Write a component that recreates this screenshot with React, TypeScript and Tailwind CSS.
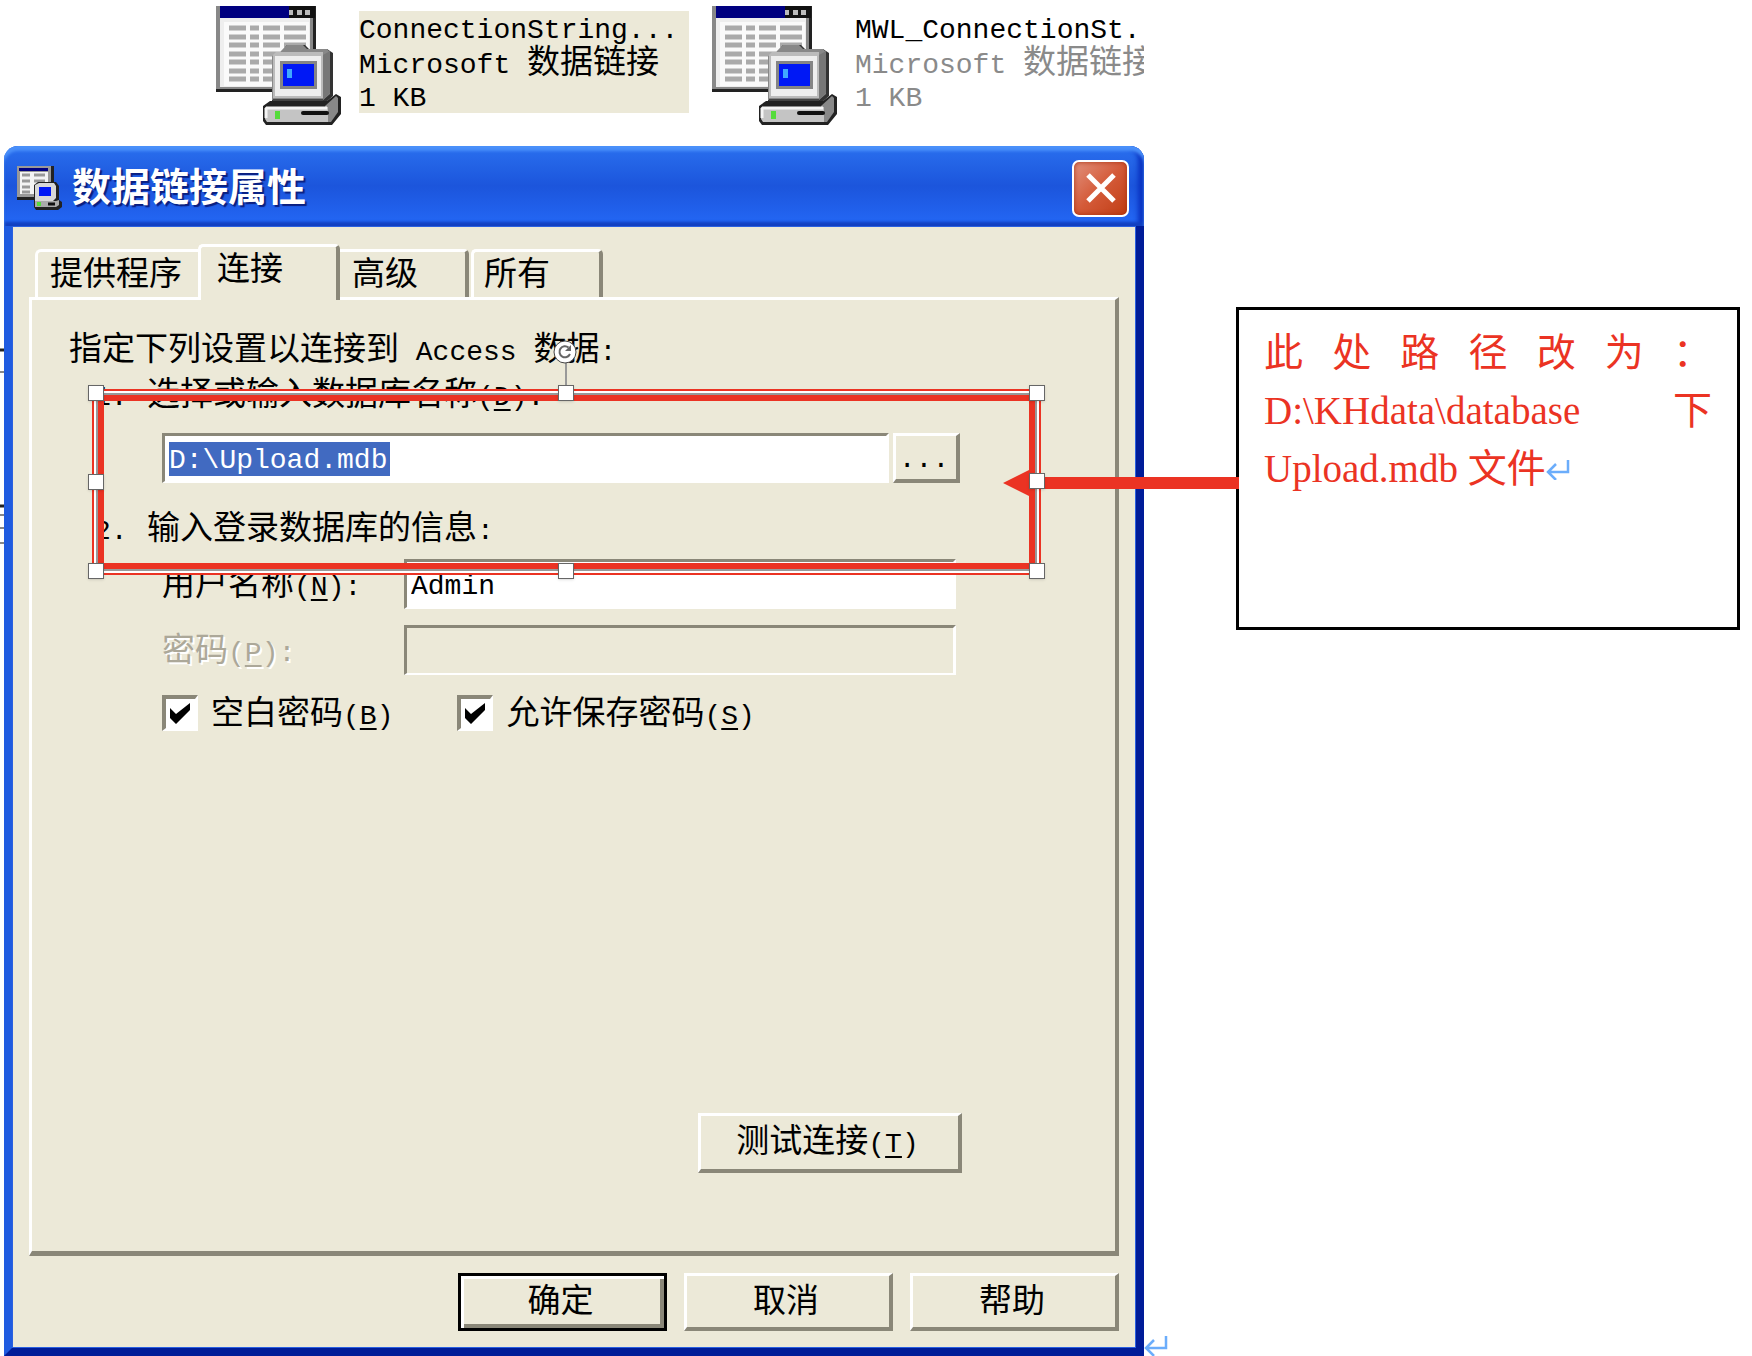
import { useState } from 'react'

const mono = "font-['Liberation_Mono','Noto_Sans_CJK_SC',monospace]"

export default function App() {
  const [blank, setBlank] = useState(true)
  const [save, setSave] = useState(true)

  return (
    <div className={`grid min-h-screen grid-cols-[1144fr_92fr_504fr_12fr] bg-white text-[33px] leading-10 text-black ${mono}`}>

      {/* Left column: files and dialog */}
      <main className="relative flex min-w-0 flex-col">
        <div className="flex h-[146px] items-start overflow-hidden whitespace-nowrap pl-[215px] pt-1.5">
          <FileIcon />
          <div className="ml-[17px] mt-[5px] h-[102px] w-[330px] shrink-0 bg-[#ece9d8] pt-[3px] leading-[34px]">
            <p className="text-[28px] leading-[34px]">ConnectionString...</p>
            <p className="h-[34px]"><En>Microsoft </En>数据链接</p>
            <p className="text-[28px] leading-[34px]">1 KB</p>
          </div>
          <div className="w-[22px] shrink-0" />
          <FileIcon />
          <div className="ml-[17px] mt-[5px] min-w-0 flex-1 overflow-hidden pt-[3px] leading-[34px] text-[#8a8a8a]">
            <p className="text-[28px] leading-[34px] text-black">MWL_ConnectionSt.</p>
            <p className="h-[34px]"><En>Microsoft </En>数据链接</p>
            <p className="text-[28px] leading-[34px]">1 KB</p>
          </div>
        </div>

        {/* page text peeking out behind the dialog */}
        <svg viewBox="0 0 4 200" className="absolute left-0 top-[348px] h-[200px] w-1">
          <path d="M0 2H4M0 158H4" stroke="#222" strokeWidth="3" />
          <path d="M0 24H4M0 167H4M0 180H4M0 195H4" stroke="#888" strokeWidth="2" />
        </svg>

        <section className="ml-1 flex flex-1 flex-col">
          <header className="flex h-20 items-center rounded-t-[14px] bg-linear-to-b from-[#2a6fee] via-[#1c55dc] to-[#2468f6] pl-[13px] pr-[15px] pt-1 shadow-[inset_0_5px_3px_#4a90fa,inset_0_-4px_3px_#1240c0,inset_-6px_0_5px_#0a32c0]">
            <TitleIcon />
            <h1 className="ml-2.5 flex-1 pt-1.5 text-[39px] font-bold leading-[48px] text-white [text-shadow:2px_2px_1px_#0a1f80]">数据链接属性</h1>
            <button aria-label="关闭" className="flex size-[57px] items-center justify-center rounded-[7px] border-2 border-white bg-linear-to-br from-[#e0907c] via-[#d45a38] to-[#c03c10] shadow-[inset_0_0_5px_#a83010]">
              <svg viewBox="0 0 32 32" className="size-8">
                <path d="M3 3 29 29 M29 3 3 29" stroke="#fff" strokeWidth="5" />
              </svg>
            </button>
          </header>

          <div className="flex flex-1 flex-col border-x-8 border-b-8 border-b-[#001c98] border-l-[#1f5be0] border-r-[#001c98] bg-[#ece9d8] pb-[17px] pl-[17px] pr-[17px] pt-[18px] shadow-[inset_0_0_0_1px_#2a60e0]">
            {/* Tabs */}
            <div role="tablist" className="flex h-[53px] items-end pl-1.5">
              <button role="tab" aria-selected="false" className="h-12 w-[163px] rounded-tl-[6px] border-l-[3px] border-t-[3px] border-white pl-3 pt-1 text-left">提供程序</button>
              <button role="tab" aria-selected="true" className="relative z-10 -mb-[3px] h-14 w-[142px] rounded-t-[5px] border-l-[3px] border-r-4 border-t-[3px] border-white border-r-[#8a8778] bg-[#ece9d8] pb-[3px] pl-4 text-left">连接</button>
              <button role="tab" aria-selected="false" className="h-12 w-[129px] rounded-tr-[5px] border-r-4 border-t-[3px] border-white border-r-[#8a8778] pl-3 pt-1 text-left">高级</button>
              <button role="tab" aria-selected="false" className="ml-0.5 h-12 w-[132px] rounded-t-[5px] border-l-[3px] border-r-4 border-t-[3px] border-white border-r-[#8a8778] pl-2.5 pt-1 text-left">所有</button>
            </div>

            {/* Panel */}
            <div role="tabpanel" className="flex flex-1 flex-col border-[3px] border-b-[5px] border-r-4 border-white border-b-[#8a8778] border-r-[#8a8778] pb-[78px] pl-[37px] pt-7">
              <p className="h-10 leading-[48px]">指定下列设置以连接到<En> Access </En>数据<En>:</En></p>

              <div className="relative mt-[5px]">
                <label htmlFor="database" className="flex h-10 pl-[25px] leading-[48px]">
                  <span className="w-[53px]"><En>1.</En></span>
                  <span>选择或输入数据库名称<Key>D</Key><En>:</En></span>
                </label>
                <div className="mt-5 flex h-[50px] gap-1 pl-[93px] pr-[155px]">
                  <div className="flex min-w-0 flex-1 items-center border-[3px] border-b-2 border-white border-l-[#8a8778] border-t-[#8a8778] bg-white pl-1">
                    <input id="database" defaultValue="D:\Upload.mdb" className="h-[34px] w-[221px] bg-[#416ac1] pt-1 text-[28px] text-white outline-none" />
                  </div>
                  <button aria-label="浏览" className="w-[67px] border-[3px] border-b-4 border-r-4 border-white border-b-[#8a8778] border-r-[#8a8778] pr-1 pt-1 text-[28px]">...</button>
                </div>
                <p className="mt-6 flex h-10 pl-[25px] leading-[48px]">
                  <span className="w-[53px]"><En>2.</En></span>
                  <span>输入登录数据库的信息<En>:</En></span>
                </p>
                <div className="mt-3 flex h-[50px] items-center pl-[93px] pr-[159px]">
                  <label htmlFor="user" className="w-[242px] pt-1.5">用户名称<Key>N</Key><En>:</En></label>
                  <input id="user" defaultValue="Admin" className="h-full min-w-0 flex-1 border-[3px] border-b-2 border-white border-l-[#8a8778] border-t-[#8a8778] bg-white pl-1 pt-1 text-[28px] outline-none" />
                </div>
                <SelectionFrame />
              </div>

              <div className="mt-4 flex h-[50px] items-center pl-[93px] pr-[159px]">
                <label htmlFor="password" className="w-[242px] pt-1.5 text-[#aca899] [text-shadow:2px_2px_0_#fff]">密码<Key>P</Key><En>:</En></label>
                <input id="password" type="password" disabled className="h-full min-w-0 flex-1 border-[3px] border-b-2 border-white border-l-[#8a8778] border-t-[#8a8778] bg-[#ece9d8]" />
              </div>

              <div className="mt-[18px] flex h-10 pl-[93px]">
                <Check id="blank" checked={blank} onChange={setBlank}>空白密码<Key>B</Key></Check>
                <span className="w-16" />
                <Check id="save" checked={save} onChange={setSave}>允许保存密码<Key>S</Key></Check>
              </div>

              <button className="mr-[153px] mt-auto h-[60px] w-[264px] self-end border-[3px] border-b-4 border-r-4 border-white border-b-[#8a8778] border-r-[#8a8778] pr-1 pt-1">
                测试连接<Key>T</Key>
              </button>
            </div>

            {/* Footer buttons */}
            <footer className="mt-[17px] flex justify-end gap-[17px]">
              <button className="h-[58px] w-[209px] border-[3px] border-black pr-1 pt-1 shadow-[inset_3px_3px_0_#fff,inset_-4px_-4px_0_#8a8778]">确定</button>
              <button className="h-[58px] w-[209px] border-[3px] border-b-4 border-r-4 border-white border-b-[#8a8778] border-r-[#8a8778] pr-1 pt-1">取消</button>
              <button className="h-[58px] w-[209px] border-[3px] border-b-4 border-r-4 border-white border-b-[#8a8778] border-r-[#8a8778] pr-1 pt-1">帮助</button>
            </footer>
          </div>
        </section>
      </main>

      <div className="flex items-end">
        <ReturnMark />
      </div>

      {/* Callout */}
      <aside className="relative mt-[307px] h-[323px] border-[3px] border-black bg-white px-[25px] pt-3.5 font-['Liberation_Serif','Noto_Sans_CJK_SC',serif] text-[39px] leading-[58px] text-[#eb3323]">
        <p className="h-[58px] [text-align-last:justify]">此处路径改为：</p>
        <p className="h-[58px] [text-align-last:justify]">D:\KHdata\database 下</p>
        <p className="flex h-[58px] items-center whitespace-pre">Upload.mdb 文件<ReturnMark /></p>
        <svg viewBox="0 0 236 30" className="absolute right-full top-[158px] h-[30px] w-[236px]">
          <path d="M0 15 30 0V9H236V21H30V30Z" fill="#eb3323" />
        </svg>
        {/* middle handle sits over the arrow */}
        <span className="absolute right-[calc(100%+194px)] top-[163px] size-4 border border-[#666] bg-white shadow" />
      </aside>
    </div>
  )
}

function En({ children }: any) {
  return <span className="whitespace-pre text-[28px]">{children}</span>
}

function Key({ children }: any) {
  return <span className="text-[28px]">(<u className="underline-offset-4">{children}</u>)</span>
}

function Check({ id, checked, onChange, children }: any) {
  return (
    <div className="flex items-center">
      <span className="relative size-9">
        <input
          id={id}
          type="checkbox"
          checked={checked}
          onChange={(e) => onChange(e.target.checked)}
          className="block size-9 appearance-none border-4 border-b-[3px] border-r-[3px] border-white border-l-[#8a8778] border-t-[#8a8778] bg-white"
        />
        {checked && (
          <svg viewBox="0 0 36 36" className="pointer-events-none absolute inset-0">
            <path d="M8 13 14 19 28 8V15L14 29 8 23Z" />
          </svg>
        )}
      </span>
      <label htmlFor={id} className="ml-[13px] pt-1.5">{children}</label>
    </div>
  )
}

function SelectionFrame() {
  const handle = 'absolute size-4 border border-[#666] bg-white shadow'
  return (
    <div className="pointer-events-none absolute left-[23px] right-[74px] top-4 h-[186px] border-2 border-[#eb3323] shadow-[inset_0_0_0_2px_#fff,inset_0_0_0_4px_#999,inset_0_0_0_10px_#eb3323]">
      <span className="absolute -top-7 left-[471px] h-7 w-0.5 bg-[#999]" />
      <svg viewBox="0 0 24 24" className="absolute -top-[51px] left-[459px] size-6">
        <circle cx="12" cy="12" r="11" fill="#fff" stroke="#444" />
        <path d="M17 14A5.500 5.500 0 1 1 15.500 7.500" fill="none" stroke="#666" strokeWidth="2" />
        <path d="M18 5V11H12Z" fill="#666" />
      </svg>
      <span className={`${handle} -left-1.5 -top-1.5`} />
      <span className={`${handle} left-[464px] -top-1.5`} />
      <span className={`${handle} -right-1.5 -top-1.5`} />
      <span className={`${handle} -left-1.5 top-[83px]`} />
      <span className={`${handle} -bottom-1.5 -left-1.5`} />
      <span className={`${handle} -bottom-1.5 left-[464px]`} />
      <span className={`${handle} -bottom-1.5 -right-1.5`} />
    </div>
  )
}

function ReturnMark() {
  return (
    <svg viewBox="0 0 24 22" className="h-[22px] w-6 shrink-0">
      <path d="M22 2V14H2 M10 6 2 14 10 22" fill="none" stroke="#6badfb" strokeWidth="2.500" />
    </svg>
  )
}

function FileIcon() {
  const rows = [22, 31, 39, 48, 56, 65, 73]
  return (
    <svg viewBox="0 0 127 121" className="h-[121px] w-[127px] shrink-0">
      <path d="M1 0H101V86H1Z" fill="#222" />
      <path d="M1 0H98V83H1Z" fill="#888" />
      <path d="M5 12H95V81H5Z" fill="#eee" />
      <path d="M9 16H94V80H9Z" fill="#fafafa" />
      <path d="M5 0H74V12H5Z" fill="#000080" />
      <path d="M74 0H100V12H74Z" fill="#111" />
      <path d="M74 4H78V9H74ZM82 4H87V9H82ZM90 4H95V9H90Z" fill="#bbb" />
      {rows.map((y) => (
        <path key={y} d={`M14 ${y}H31M35 ${y}H44M48 ${y}H65M69 ${y}H91`} stroke="#aaa" strokeWidth="5" />
      ))}
      <path d="M65 47 72 39H90L94 43H112L118 47V90L110 97H57V52Z" fill="#333" />
      <path d="M64 47 72 39H88L92 43H112L115 46V88L108 94H57V50Z" fill="#888" />
      <path d="M58 49 61 46H108V92H58Z" fill="#bbb" />
      <path d="M60 50H106V90H60Z" fill="#eee" />
      <path d="M108 49 115 45V87L108 94Z" fill="#777" />
      <path d="M65 55H102V83H65Z" fill="#858585" />
      <path d="M68 58H99V80H68Z" fill="#0018f5" />
      <path d="M72 63H77V72H72Z" fill="#40a8ff" />
      <path d="M58 93H108V100H58Z" fill="#444" />
      <path d="M48 100 55 95H112L121 88 126 91V108L117 119H51L48 115Z" fill="#222" />
      <path d="M110 100 121 90 123 92V106L116 116H110Z" fill="#888" />
      <path d="M50 101H113V116H52L50 113Z" fill="#c4c4c4" />
      <path d="M51 102H112M51 102V112" stroke="#f5f5f5" strokeWidth="3" />
      <path d="M88 107H112" stroke="#111" strokeWidth="4" strokeLinecap="round" />
      <path d="M60 105H65V113H60Z" fill="#55dc3c" />
    </svg>
  )
}

function TitleIcon() {
  return (
    <svg viewBox="0 0 45 44" className="h-11 w-[45px] shrink-0">
      <path d="M0 0H37V34H0Z" fill="#222" />
      <path d="M0 0H34V31H0Z" fill="#999" />
      <path d="M3 6H31V28H3Z" fill="#f4f4f4" />
      <path d="M2 2H31V5H2Z" fill="#000080" />
      <path d="M5 9H13M17 9H28M5 15H13M17 15H28M5 21H13M17 21H24M5 26H13" stroke="#999" strokeWidth="3" />
      <path d="M17 19 21 16H39L42 20V34L45 36V41L41 44H19L17 41Z" fill="#222" />
      <path d="M18 19 22 17H37L39 20V32L36 35H18Z" fill="#d8d8d8" />
      <path d="M22 21H34V30H22Z" fill="#0018f5" />
      <path d="M18 35H39L42 34V39L39 41H18Z" fill="#aaa" />
      <path d="M20 36H24V40H20Z" fill="#55dc3c" />
      <path d="M31 38H38" stroke="#111" strokeWidth="3" />
    </svg>
  )
}
